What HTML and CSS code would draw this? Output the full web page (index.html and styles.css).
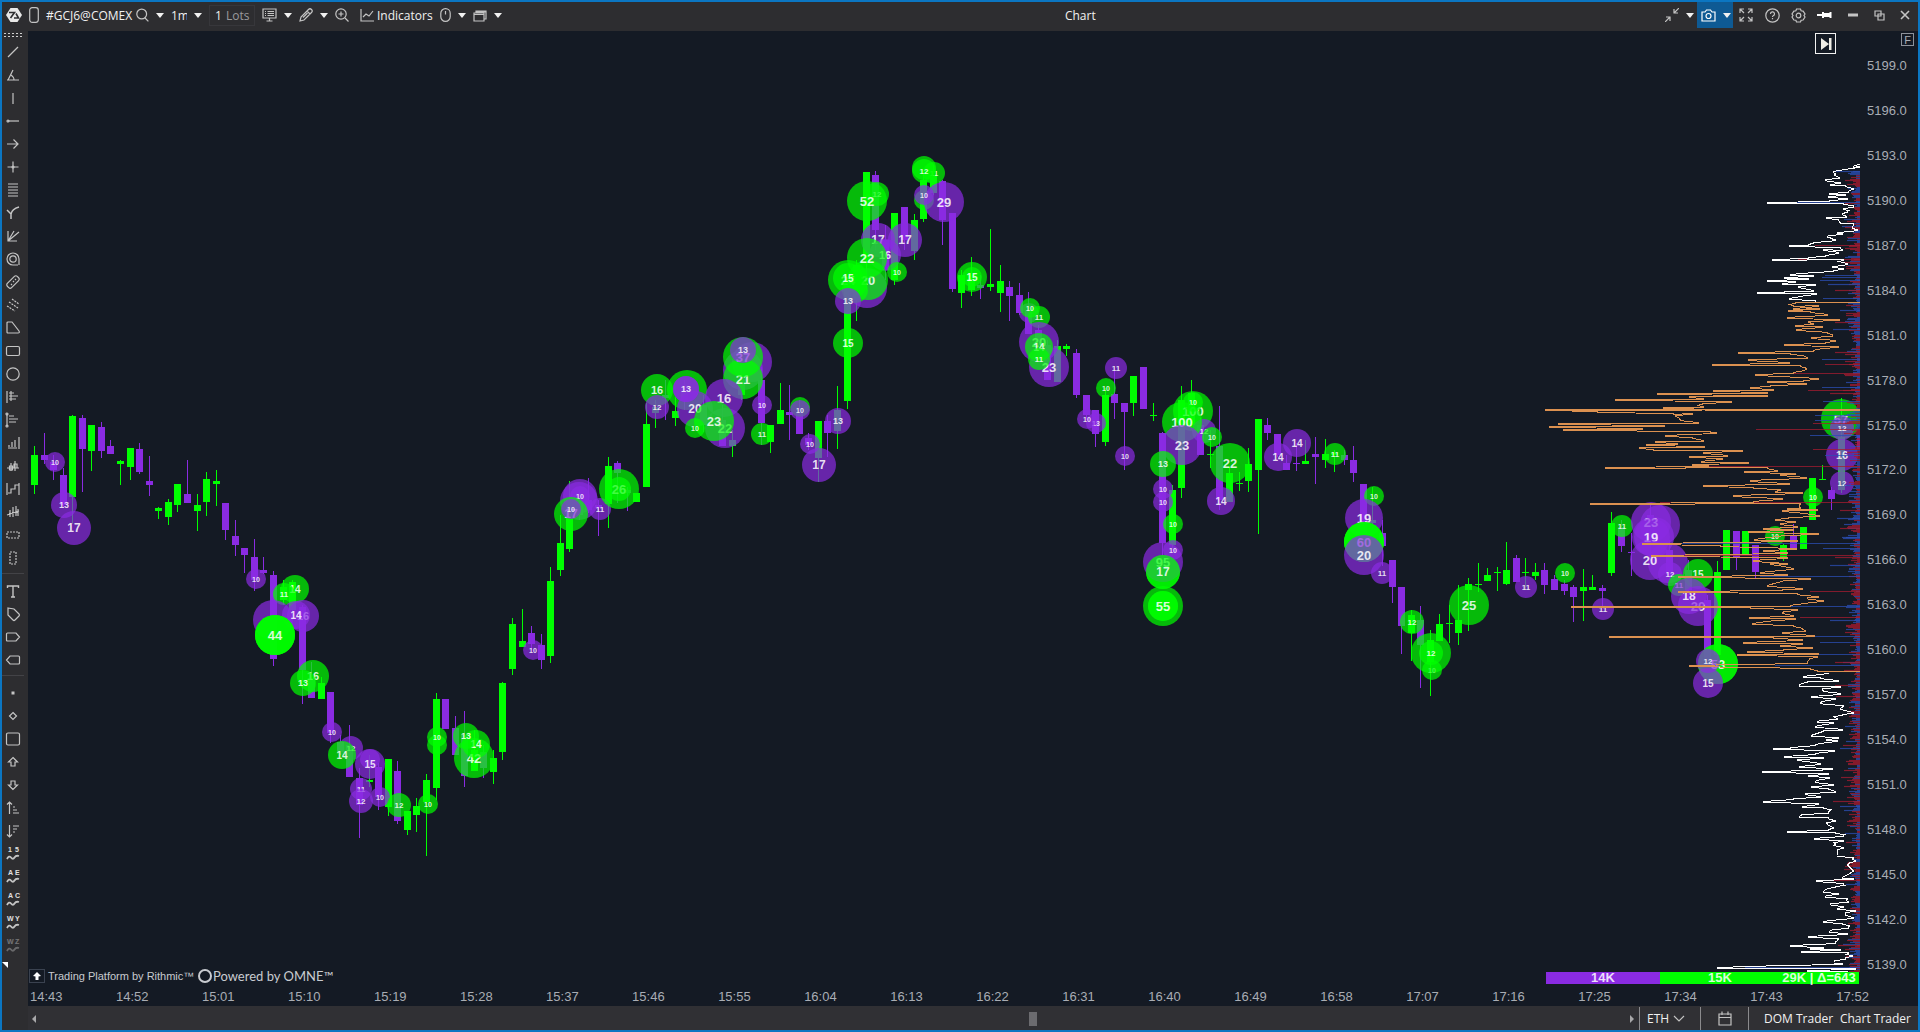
FILE: index.html
```html
<!DOCTYPE html>
<html lang="en">
<head>
  <meta charset="UTF-8" />
  <title>Chart - #GCJ6@COMEX</title>
  <meta name="viewport" content="width=device-width, initial-scale=1.0" />
  <link rel="stylesheet" href="styles.css">
</head>
<body>
  <header class="top-bar">
    <div class="left-bar">
      <button aria-label="Menu"><svg width="16" height="16" viewBox="0 0 16 16"><path d="M4.500 1h7L16 8l-4.500 7h-7L0 8z" fill="#e8e8e8" stroke="none"/><path d="M3 5.500h5.500L4.500 11M8 11h4.500L10 6.500" fill="none" stroke="#2d2d30" stroke-width="1.600"/></svg></button>
      <button aria-label="Link group"><svg width="10" height="16" viewBox="0 0 10 16"><rect x=".7" y=".7" width="8.6" height="14.6" rx="2.5"/></svg></button>
      <span class="symbol">#GCJ6@COMEX</span>
      <button aria-label="Search symbol"><svg width="13" height="14" viewBox="0 0 13 14"><circle cx="5.7" cy="6" r="4.9"/><path d="M9 10l3.4 3.4"/></svg></button>
      <button aria-label="Symbol list" class="caret"></button>
      <select aria-label="Time frame" class="frame"><option>1m</option></select>
      <button aria-label="Time frame list" class="caret"></button>
      <label class="lots"><input type="text" value="1" />Lots</label>
      <button aria-label="Display"><svg width="15" height="14" viewBox="0 0 15 14"><path d="M1 1h13v9H1zM7.500 10v3M4.500 13h6M3 3.500h1M5.500 3.500H12M3 5.500h1M5.500 5.500H12M3 7.500h1M5.500 7.500H12"/></svg></button>
      <button aria-label="Display list" class="caret"></button>
      <button aria-label="Draw"><svg width="14" height="14" viewBox="0 0 14 14"><path d="M1 13l1-4 7.500-7.500a2 2 0 0 1 3 3L5 12zM8 3l3 3M4 9.500l4.500-4.500"/></svg></button>
      <button aria-label="Draw list" class="caret"></button>
      <button aria-label="Zoom in"><svg width="14" height="14" viewBox="0 0 14 14"><circle cx="6" cy="6" r="5.200"/><path d="M10 10l3.500 3.500M6 3.500v5M3.500 6h5"/></svg></button>
      <button class="indicators"><svg width="14" height="13" viewBox="0 0 14 13"><path d="M1 0v12h13M3 8l3-3 3 2 4-5"/></svg>Indicators</button>
      <button aria-label="Mouse"><svg width="11" height="14" viewBox="0 0 11 14"><rect x=".8" y=".7" width="9.400" height="12.600" rx="4.600"/><path d="M5.500 3v3.500"/></svg></button>
      <button aria-label="Mouse list" class="caret"></button>
      <button aria-label="Templates"><svg width="14" height="13" viewBox="0 0 14 13"><path d="M1 4h10v8H1zM1 5.500h10M3 4V2h10v8h-2M3 3h10" /></svg></button>
      <button aria-label="Template list" class="caret"></button>
    </div>
    <div class="title">Chart</div>
    <div class="right-bar">
      <button aria-label="Shrink"><svg width="14" height="14" viewBox="0 0 14 14"><path d="M14 0L9 5M9 1v4h4M0 14l5-5M1 9h4v4"/></svg></button>
      <button aria-label="Shrink options" class="caret"></button>
      <div class="shot">
        <button aria-label="Screenshot"><svg width="15" height="13" viewBox="0 0 15 13"><path d="M1 3h3l1.500-2h4L11 3h3v9H1z"/><circle cx="7.500" cy="7" r="2.500"/></svg></button>
        <button aria-label="Screenshot options" class="caret"></button>
      </div>
      <button class="win" aria-label="Full screen"><svg width="14" height="14" viewBox="0 0 14 14"><path d="M1 5V1h4M1 1l4 4M9 1h4v4M13 1L9 5M1 9v4h4M1 13l4-4M13 9v4H9M13 13L9 9"/></svg></button>
      <button class="win" aria-label="Help"><svg width="15" height="15" viewBox="0 0 15 15"><circle cx="7.500" cy="7.500" r="6.700"/><path d="M5.500 6a2 2 0 1 1 2.700 1.800q-.7.300-.7 1.200M7.500 10v1.200"/></svg></button>
      <button class="win" aria-label="Settings"><svg width="15" height="15" viewBox="0 0 15 15"><path d="M5.500 1h4l.6 1.800 2 .3L14 6l-1 1.500L14 9l-1.900 3-2 .2L9.500 14h-4l-.6-1.800-2-.2L1 9l1-1.500L1 6l1.900-2.900 2-.3z"/><circle cx="7.500" cy="7.500" r="2.300"/></svg></button>
      <button class="win" aria-label="Pin"><svg width="15" height="8" viewBox="0 0 15 8"><path d="M0 4h6M6 1v6M6 3h6v2H6zM13.500 1v6" stroke="#fff" stroke-width="2"/></svg></button>
      <button class="win minimize" aria-label="Minimize"><svg width="10" height="4" viewBox="0 0 10 4"><path d="M0 2h10" stroke-width="3"/></svg></button>
      <button class="win" aria-label="Restore"><svg width="11" height="11" viewBox="0 0 11 11"><path d="M1 1h6v5H1zM4 4h6v6H4z"/></svg></button>
      <button class="win" aria-label="Close"><svg width="10" height="10" viewBox="0 0 10 10"><path d="M1 1l8 8M9 1L1 9" stroke-width="1.600"/></svg></button>
    </div>
  </header>

  <div class="workspace">
    <nav class="tools" id="tools" aria-label="Drawing tools"></nav>

    <main class="main">
      <div class="chart-area">
        <div class="plot">
          <svg class="chart" id="chart" viewBox="28 31 1832 954" preserveAspectRatio="xMaxYMin meet" role="img" aria-label="Price chart"></svg>
          <button class="last-bar" aria-label="Go to last bar"><svg width="12" height="12" viewBox="0 0 12 12"><path d="M1 0v12l8-6zM9 0h2.500v12H9z" fill="#f0eee6" stroke="none"/></svg></button>
          <div class="credits">
            <span class="badge"><svg width="10" height="8" viewBox="0 0 10 8"><path d="M5 0l4 4-2.500.5V8h-3V4.500L1 4z" fill="#fff" stroke="none"/></svg></span>
            <span class="rithmic">Trading Platform by Rithmic™</span>
            <span class="ring"></span>
            <span class="omne">Powered by OMNE™</span>
          </div>
        </div>
        <div class="price-axis" id="prices"><button class="fixed-scale">F</button></div>
        <div class="time-axis" id="times"></div>
      </div>

      <footer class="status">
        <div class="scroller">
          <i class="arrow-left"></i>
          <i class="thumb"></i>
          <i class="arrow-right"></i>
        </div>
        <label class="session">
          <select aria-label="Session"><option>ETH</option></select>
          <svg width="12" height="7" viewBox="0 0 12 7"><path d="M1 1l5 5 5-5"/></svg>
        </label>
        <button class="calendar" aria-label="Calendar"><svg width="14" height="15" viewBox="0 0 14 15"><path d="M1 3h12v11H1zM1 6.500h12M4 .5V4M10 .5V4"/></svg></button>
        <div class="traders">
          <button>DOM Trader</button>
          <button>Chart Trader</button>
        </div>
      </footer>
    </main>
  </div>

  <script src="chart.js"></script>
</body>
</html>
```

FILE: styles.css
```css
* {
  margin: 0;
  padding: 0;
  box-sizing: border-box;
}

body {
  height: 100vh;
  display: flex;
  flex-direction: column;
  overflow: hidden;
  border: 2px solid #0b76c2;
  background: #2d2d30;
  color: #f1f1f1;
  font-family: "Open Sans", "Noto Sans", sans-serif;
  font-size: 12px;
}

button, select, input {
  border: none;
  background: none;
  color: inherit;
  font: inherit;
  appearance: none;
  outline: none;
}

button {
  display: flex;
  align-items: center;
  justify-content: center;
  cursor: pointer;
}

svg {
  display: block;
  fill: none;
  stroke: #c4c4c4;
  stroke-width: 1.2;
}

/* top bar */
.top-bar {
  display: flex;
  flex: 0 0 29px;
  align-items: stretch;
  padding-bottom: 3px;
}

.left-bar, .right-bar {
  display: flex;
  align-items: center;
}

.left-bar {
  gap: 7px;
  padding-left: 4px;
}

.symbol {
  width: 83px;
  white-space: nowrap;
}

.caret::before {
  content: "";
  border: 4px solid transparent;
  border-top: 5px solid #f1f1f1;
  border-bottom: 0;
}

.frame {
  width: 16px;
}

.lots {
  display: flex;
  align-items: center;
  width: 46px;
  height: 21px;
  padding-left: 5px;
  border: 1px solid #37373b;
  color: #9a9a9d;
}

.lots input {
  width: 11px;
  color: #f1f1f1;
}

.indicators {
  gap: 3px;
  margin-left: 4px;
}

.title {
  flex: 1;
  align-self: center;
  padding-right: 6px;
  text-align: center;
}

.right-bar {
  gap: 7px;
}

.shot {
  display: flex;
  align-self: stretch;
  gap: 7px;
  width: 36px;
  margin-left: -4px;
  margin-right: -7px;
  padding-left: 4px;
  background: #0e5a94;
}

.shot svg {
  stroke: #fff;
}

.win {
  width: 26px;
  height: 26px;
  margin-right: -7px;
}

.win:last-child {
  margin-right: 0;
}

.minimize {
  margin-left: 3px;
}

/* drawing tools */
.workspace {
  display: flex;
  flex: 1;
  min-height: 0;
}

.tools {
  position: relative;
  flex: 0 0 26px;
  padding-right: 4px;
}

.tools .grip {
  height: 9px;
  margin: 0 1px;
  background: radial-gradient(#d0d0d0 1px, transparent 1px) 0 1px / 4px 3px;
  background-clip: content-box;
  padding: 2px 0;
}

.tools button {
  width: 22px;
  height: 23px;
}

.tools hr {
  border: none;
  border-top: 1px solid #434347;
  margin: 4px 0 5px;
}

.tools .off {
  opacity: 0.4;
}

.tools svg text {
  fill: #e0e0e0;
  stroke: none;
  font: bold 7px "Liberation Sans", sans-serif;
}

.tools::after {
  content: "";
  position: absolute;
  left: 0;
  bottom: 62px;
  border-top: 6px solid #fff;
  border-left: 6px solid transparent;
}

/* chart */
.main {
  display: flex;
  flex: 1;
  flex-direction: column;
  min-width: 0;
}

.chart-area {
  display: grid;
  flex: 1;
  grid-template-columns: 1fr 58px;
  grid-template-rows: 1fr 21px;
  min-height: 0;
  background: #141a24;
  color: #a9adb4;
  font: 13px/18px "Liberation Sans", Arial, sans-serif;
}

.plot {
  position: relative;
  min-width: 0;
  min-height: 0;
}

.chart {
  position: absolute;
  width: 100%;
  height: 100%;
}

.chart text {
  font: bold 13px "Liberation Sans", Arial, sans-serif;
  text-anchor: middle;
  stroke: none;
  fill: #fff;
  fill-opacity: 0.85;
}

.up {
  fill: #00ff00;
  stroke: none;
}

.down {
  fill: #8a2be2;
  stroke: none;
}

circle.up, circle.down {
  fill-opacity: 0.7;
}

.outer, .value {
  stroke-width: 1;
  shape-rendering: crispEdges;
}

.outer {
  stroke: #fff;
}

.value {
  stroke: #dc9150;
}

.buy {
  stroke: #2b4fb4;
  stroke-opacity: 0.75;
}

.sell {
  stroke: #a51c30;
  stroke-opacity: 0.75;
}

.last-bar {
  position: absolute;
  top: 2px;
  right: 24px;
  width: 21px;
  height: 21px;
  border: 1px solid #f1f1f1;
}

.credits {
  position: absolute;
  left: 1px;
  bottom: 0;
  display: flex;
  align-items: center;
  gap: 3px;
  color: #c8cbd0;
}

.badge {
  padding: 2px;
  border: 1px solid #3a4250;
}

.rithmic {
  width: 147px;
  font-size: 11px;
  white-space: nowrap;
}

.ring {
  width: 14px;
  height: 14px;
  border: 2px solid #c8cbd0;
  border-radius: 50%;
}

.omne {
  margin-left: -2px;
  font-family: Lato, sans-serif;
  font-size: 13px;
}

.price-axis {
  position: relative;
  display: flex;
  flex-direction: column;
  justify-content: space-between;
  padding: 26px 0 11px 7px;
}

.fixed-scale {
  position: absolute;
  top: 2px;
  right: 4px;
  width: 13px;
  height: 13px;
  border: 1px solid #8d929b;
  font-size: 11px;
}

.time-axis {
  display: flex;
  grid-column: 1 / 3;
  justify-content: space-between;
  padding: 3px 49px 0 2px;
}

/* bottom bar */
.status {
  display: flex;
  flex: 0 0 24px;
  padding-top: 1px;
  background: #303034;
}

.scroller {
  display: flex;
  flex: 1;
  align-items: center;
  justify-content: space-between;
  padding: 0 5px 0 4px;
}

.arrow-left, .arrow-right {
  border: 4px solid transparent;
}

.arrow-left {
  border-right-color: #a8a8aa;
  border-left: 0;
}

.arrow-right {
  border-left-color: #a8a8aa;
  border-right: 0;
}

.thumb {
  width: 8px;
  height: 14px;
  margin-left: 400px;
  background: #6b6b6f;
}

.session, .calendar, .traders {
  display: flex;
  align-items: center;
  border-left: 1px solid #8a8a8d;
}

.session {
  width: 61px;
  gap: 4px;
  padding-left: 7px;
}

.session select {
  width: 22px;
}

.calendar {
  width: 48px;
}

.traders {
  justify-content: space-between;
  width: 170px;
  padding: 0 7px 0 15px;
}
```

FILE: chart.js
```js
// candle columns: slot, direction, high, body top, body bottom, low
const candles = [
  [0,1,446,455,485,494],[1,0,433,455,460,464],[2,0,455,462,470,480],[3,0,468,475,505,508],[4,1,415,416,497,524],
  [5,0,415,418,449,492],[6,1,425,425,451,471],[7,0,422,427,451,458],[8,0,440,446,454,454],[9,1,460,461,464,485],
  [10,1,448,448,467,480],[11,0,443,449,472,474],[12,0,456,481,485,496],[13,1,507,508,511,519],[14,1,499,502,517,525],
  [15,1,484,484,505,512],[16,0,460,494,503,503],[17,1,494,505,511,531],[18,1,472,479,502,516],[19,1,470,481,484,506],
  [20,0,503,503,530,540],[21,0,520,536,545,556],[22,0,548,548,555,573],[23,0,539,557,580,591],[24,0,557,570,573,574],
  [25,0,571,575,659,666],[26,1,580,587,600,605],[27,1,580,582,610,616],[28,0,605,607,670,704],[29,0,662,680,698,698],
  [30,1,677,683,699,699],[31,0,692,692,733,743],[32,0,735,742,752,755],[33,0,725,745,777,777],[34,0,768,778,805,838],
  [35,1,755,780,782,787],[36,0,763,767,797,810],[37,1,759,759,807,816],[38,0,761,771,821,824],[39,1,811,811,830,835],
  [40,1,798,806,815,832],[41,1,774,780,802,856],[42,1,693,699,788,800],[43,0,699,699,729,729],[44,0,716,728,755,755],
  [45,0,711,735,776,787],[46,1,730,750,771,771],[47,0,745,752,768,778],[48,1,750,758,772,784],[49,1,682,683,752,760],
  [50,1,618,624,669,675],[51,1,609,641,647,647],[52,0,626,633,644,650],[53,0,634,645,660,669],[54,1,567,581,656,663],
  [55,1,515,543,570,576],[56,1,481,500,549,552],[57,0,490,495,515,520],[58,0,478,500,510,513],[59,0,500,505,508,536],
  [60,1,457,466,504,528],[61,0,461,463,473,503],[62,0,487,490,493,511],[63,1,493,493,502,502],[64,1,403,424,487,487],
  [65,1,400,407,413,428],[66,0,380,395,398,420],[67,1,397,411,418,426],[68,0,380,385,400,410],[70,0,395,405,425,432],
  [72,0,405,420,446,446],[73,1,430,440,446,457],[74,1,365,380,395,400],[76,0,367,380,423,445],[77,1,425,425,442,453],
  [78,1,383,410,424,424],[79,0,385,412,415,440],[80,0,400,413,434,434],[81,0,433,438,445,450],[82,1,421,421,458,482],
  [83,0,415,421,433,457],[84,1,386,410,431,449],[85,1,280,285,401,409],[86,1,260,265,300,321],[87,1,172,172,260,290],
  [88,0,171,175,230,250],[89,0,225,240,270,280],[90,1,213,213,280,285],[91,0,207,207,240,250],[92,1,214,220,251,260],
  [93,1,170,180,219,222],[94,1,165,175,193,195],[95,0,180,181,220,245],[96,0,213,213,289,292],[97,1,270,275,293,308],
  [98,1,257,273,290,296],[99,0,275,285,288,299],[100,1,229,284,287,291],[101,1,265,281,293,312],[102,0,281,287,296,321],
  [103,0,283,295,313,315],[104,0,292,310,334,334],[105,0,325,330,345,350],[106,0,340,345,380,380],[107,1,340,346,382,382],
  [108,1,344,346,349,356],[109,0,349,353,395,398],[110,0,395,395,415,420],[111,0,410,410,434,447],[112,1,388,395,442,446],
  [113,0,370,394,403,419],[114,0,403,403,412,470],[115,1,376,376,403,416],[116,0,367,367,409,409],[117,1,403,415,416,421],
  [118,0,432,433,543,556],[119,1,485,490,545,550],[120,1,386,400,488,498],[121,1,380,393,425,430],[122,0,418,425,455,455],
  [123,1,430,454,455,468],[124,0,406,446,500,510],[125,1,467,473,502,502],[126,1,472,483,484,491],[127,1,448,464,481,492],
  [128,1,419,419,470,534],[129,0,418,425,433,440],[130,0,434,434,455,457],[131,0,455,463,470,470],[132,0,443,463,464,471],
  [133,1,440,461,464,464],[134,0,437,454,457,484],[135,1,439,454,460,468],[136,1,450,453,455,472],[137,0,450,455,460,465],
  [138,0,446,460,473,482],[139,0,484,484,540,545],[140,1,487,520,523,530],[141,0,520,533,546,566],[142,0,560,560,587,603],
  [143,0,587,587,626,654],[144,1,610,615,633,661],[145,0,606,620,645,688],[146,1,630,640,662,696],[147,1,614,624,641,641],
  [148,1,605,623,624,643],[149,1,585,620,633,645],[150,1,578,584,590,631],[151,1,563,584,585,592],[152,1,568,575,581,581],
  [153,1,567,572,573,591],[154,1,542,570,584,585],[155,0,555,558,582,582],[156,1,558,572,573,590],[157,1,563,572,576,580],
  [158,0,563,570,585,594],[159,0,575,579,590,590],[160,0,580,584,591,595],[161,0,585,587,597,622],[162,1,569,587,591,621],
  [163,1,575,587,590,590],[164,0,585,588,591,607],[165,1,512,523,573,576],[166,0,520,527,546,552],[167,0,533,552,553,576],
  [169,0,503,515,545,560],[171,0,540,550,575,580],[173,0,560,570,590,600],[175,0,595,600,660,665],[176,1,561,572,655,660],
  [177,1,530,530,570,570],[178,0,531,531,557,570],[179,1,531,531,555,555],[180,0,545,545,572,578],[183,1,544,545,559,561],
  [184,0,524,535,549,549],[185,1,527,527,549,549],[186,1,478,478,520,520],[187,1,465,479,480,480],[188,0,487,490,499,510],
  [189,1,398,437,490,493],[191,0,430,435,449,452]
];

// big trades: x, y, buy side, size, label (when it differs from size)
const trades = [
  [55,462,0,10],[64,505,0,13],[74,528,0,17],[256,579,0,10],[295,589,1,14],[284,594,1,11],[273,620,0,20,''],
  [303,616,0,16],[296,615,0,14],[275,635,1,20,''],[275,635,1,20,''],[275,635,1,44],[313,676,1,16],[303,683,1,13],
  [332,732,0,10],[351,748,0,12],[342,755,1,14],[370,759,0,10,''],[370,764,0,15],[361,789,0,11],[361,801,0,12],
  [380,797,0,10],[399,805,1,12],[428,804,1,10],[437,745,1,10,''],[437,737,1,10],[474,758,1,42],[476,744,1,14],[466,736,1,13],
  [533,650,0,10],[579,501,0,19,''],[580,496,0,17,''],[580,496,0,10],[600,509,0,11],[571,514,1,17],[571,509,0,10],
  [619,489,1,26],[619,489,1,12,''],[657,390,1,16],[657,407,0,12],[687,390,1,20,''],[695,409,0,18,'20'],[686,389,0,13,''],[686,389,0,13],
  [752,362,0,20,''],[743,370,0,20,''],[743,379,1,21],[743,357,1,37],[743,350,0,13],[724,398,0,19,'16'],[725,428,0,22],
  [714,421,1,23],[695,428,1,10],[762,405,0,10],[762,434,1,11],[800,407,1,10,''],[800,410,0,10],[810,444,0,10],
  [819,465,0,17],[838,421,0,13],[848,343,1,15],
  [877,194,1,12],[867,201,1,52],[905,240,0,17],[878,240,0,17],[885,255,0,16],[867,288,0,20,''],[868,280,1,20],
  [867,258,1,22],[897,272,1,10],[848,280,1,24],[855,290,1,13,''],[848,278,1,15],[848,301,0,13],[934,173,1,11],[924,168,1,12,''],
  [924,171,1,12],[924,200,1,10,''],[944,202,0,29],[924,195,0,10],[972,277,1,10,''],[972,277,1,15],[1029,313,0,10,''],
  [1039,317,1,11],[1030,308,1,10],[1039,342,0,20],[1049,367,0,23],[1039,347,1,14],[1039,359,1,11],[1106,388,1,10],
  [1116,368,0,11],[1096,423,0,10,'13'],[1087,419,0,10],[1125,456,0,10],
  [1193,411,1,100],[1193,402,1,10],[1204,431,0,12],[1212,437,1,10],[1182,422,1,100],[1182,445,0,23],[1163,464,1,13],
  [1163,489,0,10],[1163,502,0,10],[1173,524,1,10],[1163,572,1,17,''],[1163,562,0,95],[1173,550,0,10],[1163,572,1,17],
  [1163,606,1,15,''],[1163,606,1,15,''],[1163,606,1,55],[1230,463,1,22],[1221,501,0,14],[1278,457,0,14],[1297,443,0,14],
  [1335,454,1,11],[1374,496,1,10],[1364,518,0,19],[1364,542,1,20,''],[1364,542,1,20,''],[1364,542,1,60],[1364,555,0,20],
  [1382,573,0,11],[1412,622,1,12],[1432,670,1,10],[1431,653,1,20,''],[1431,653,1,12],[1469,605,1,25],[1565,573,1,10],
  [1526,587,0,11],[1603,609,0,11],[1622,526,1,11],[1660,525,0,20,''],[1654,537,0,20,''],[1651,522,0,23],[1651,537,0,19],
  [1668,563,0,20,''],[1650,560,0,20],[1670,574,0,12],[1698,574,1,15],[1679,585,1,11],[1698,606,0,20],[1689,596,0,18],
  [1718,664,1,20,''],[1718,664,1,53],[1708,661,0,12],[1708,683,0,15],[1775,536,1,10],[1813,497,1,10],
  [1841,419,1,57],[1842,428,0,12],[1842,455,0,16],[1842,483,0,12]
];

// volume profile: width, y
const above = [
  0,163,7,166,0,166,27,171,25,173,21,177,35,179,20,182,30,184,15,185,7,188,12,191,31,193,15,194,32,196,13,198,31,200,
  93,202,17,203,7,205,17,208,13,211,18,213,14,216,34,217,20,222,7,223,8,227,3,229,23,232,18,233,33,236,30,237,25,239,
  47,242,52,244,71,245,20,247,18,249,37,249,22,252,35,255,52,257,88,259,17,259,13,263,28,266,17,268,27,270,70,274,
  47,275,76,277,52,278,93,280,65,281,78,283,45,284,62,286,47,290,103,292,44,293,71,298,45,300
];
const value = [
  0,301,65,302,67,305,42,305,67,308,41,308,72,310,50,311,33,314,73,317,21,319,52,321,47,323,65,325,38,326,64,329,
  33,332,28,335,49,337,25,340,35,342,76,344,22,346,47,350,122,352,70,353,53,357,112,359,71,362,148,364,60,365,54,368,
  67,372,105,374,42,378,57,380,93,381,54,383,90,385,110,387,87,389,147,390,93,392,203,393,93,395,171,396,157,398,
  245,399,129,401,158,403,157,406,197,407,167,408,315,409,0,409,315,409,263,411,187,413,168,413,185,415,180,419,
  162,422,302,423,196,425,311,426,218,428,297,429,150,431,144,432,195,435,168,437,157,440,205,441,183,443,214,444,
  156,446,221,447,207,449,118,450,157,452,133,455,171,456,138,458,159,461,112,462,168,464,152,465,255,467,93,467,
  83,470,116,471,65,473,80,474,54,477,110,480,71,483,157,485,107,487,80,489,85,491,58,492,127,495,78,498,107,501,
  270,503,60,503,60,507,73,508,43,509,78,510,41,515,72,517,85,519,65,521,80,523,63,526,97,528,67,529,112,531,42,533,
  106,539,63,540,218,543,140,545,64,548,97,550,73,552,209,555,73,557,107,560,73,563,90,563,67,568,100,572,73,574,
  182,576,50,578,93,585,58,588,78,589,182,591,63,593,42,596,53,597,37,600,70,605,289,606,110,607,63,609,78,612,
  67,615,111,617,65,618,108,623,67,625,55,630,78,632,46,635,251,636,87,637,58,639,117,642,58,643,80,645,48,647,
  77,649,113,651,42,653,123,654,43,656,53,662,171,665,50,668,43,670,0,671
];
const below = [
  32,672,57,676,40,677,22,680,53,681,61,685,20,686,38,688,37,690,20,693,49,696,25,698,40,702,17,705,20,708,7,712,
  18,714,23,718,43,721,27,722,45,726,18,729,37,730,49,735,22,737,34,739,23,740,45,744,70,747,87,748,26,750,45,753,
  76,756,37,757,63,759,40,763,61,766,28,768,38,769,98,771,32,773,52,775,31,777,45,781,27,784,49,786,25,791,55,793,
  40,796,67,798,97,801,42,803,58,806,37,807,32,812,59,814,61,816,32,817,25,820,33,823,27,827,32,829,73,831,25,832,
  17,835,46,838,17,840,25,843,17,847,23,855,7,857,5,860,12,863,7,870,18,877,7,878,44,880,17,883,25,886,37,891,
  22,893,35,896,13,898,12,901,30,903,17,906,23,908,5,910,15,913,7,917,37,921,18,923,12,927,31,931,13,933,52,936,
  22,938,25,942,70,945,37,947,50,948,20,949,59,951,12,952,8,955,15,958,26,962,18,963,143,967,5,968,53,970,13,971,123,972
];

// strongest delta rows: y, length, buy side
const deltas = [
  [171,27,1],[202,75,1],[245,45,0],[259,62,0],[275,35,1],[277,38,1],[280,40,1],[284,32,1],[290,25,0],[298,37,1],[310,20,1],
  [322,25,0],[329,27,1],[352,25,0],[359,38,1],[364,35,0],[373,85,0],[387,38,1],[390,52,0],[393,30,0],[401,37,1],[410,105,0],
  [415,45,1],[420,45,1],[423,47,0],[429,104,0],[435,50,1],[449,47,0],[455,35,1],[466,160,0],[502,200,0],[510,20,0],
  [518,23,1],[528,20,0],[537,18,1],[543,200,1],[548,37,1],[555,180,0],[557,25,0],[565,30,1],[576,100,1],[591,50,0],
  [606,110,1],[617,60,0],[620,30,1],[636,90,1],[642,40,1],[654,43,1],[662,25,0],[665,85,1],[685,25,0],[696,24,0],
  [748,20,1],[777,19,0],[801,27,0],[806,20,1],[880,27,0],[945,22,0],[967,115,1]
];

const RIGHT = 1860;
const svg = document.getElementById('chart');
let out = '';

candles.forEach(([i, up, high, top, bottom, low]) => {
  const x = Math.round(34 + i * 9.56);
  const cls = up ? 'up' : 'down';
  out += `<rect class="${cls}" x="${x}" y="${high}" width="1" height="${low - high}"/>`;
  out += `<rect class="${cls}" x="${x - 3}" y="${top}" width="7" height="${bottom - top}"/>`;
});

// later trades lie over the labels of earlier ones
trades.forEach(([x, y, up, size, label]) => {
  const r = Math.min(size, 20);
  const text = label === undefined ? size : label;
  out += `<circle class="${up ? 'up' : 'down'}" cx="${x}" cy="${y}" r="${r}"/>`;
  if (text === '') return;
  const fs = Math.ceil(r * 0.65);
  out += `<text x="${x}" y="${y + Math.round(fs * 0.36)}" style="font-size:${fs}px">${text}</text>`;
});

// small delta rows between the strong ones
let seed = 7;
function rnd() {
  seed = (seed * 16807) % 2147483647;
  return seed / 2147483647;
}
let buy = true;
for (let y = 171; y < 972; y++) {
  if (rnd() > 0.6) buy = !buy;
  const len = 3 + Math.round(rnd() * rnd() * 15);
  out += `<path class="${buy ? 'buy' : 'sell'}" d="M${RIGHT} ${y}.5h-${len}"/>`;
}
deltas.forEach(([y, len, buySide]) => {
  out += `<path class="${buySide ? 'buy' : 'sell'}" d="M${RIGHT} ${y}.5h-${len}"/>`;
});

function profile(data, cls) {
  let pts = '';
  for (let i = 0; i < data.length; i += 2) {
    const x = RIGHT - data[i];
    const y = data[i + 1];
    pts += `${x},${y}.5 ${x},${y + 1}.5 `;
    // wide gaps between two levels get a small step halfway
    if (data[i + 3] - y > 2) {
      const mid = (x + RIGHT - data[i + 2]) / 2 + rnd() * 12 - 6;
      pts += `${Math.min(mid, RIGHT - 3)},${y + 2}.5 `;
    }
  }
  return `<polyline class="${cls}" points="${pts}"/>`;
}
out += profile(above, 'outer') + profile(value, 'value') + profile(below, 'outer');

// volume totals
out += `<rect class="down" x="1546" y="972" width="114" height="12"/>
  <rect class="up" x="1660" y="972" width="199" height="12"/>
  <text x="1603" y="982">14K</text>
  <text x="1720" y="982">15K</text>
  <text x="1819" y="982">29K | Δ=643</text>`;
svg.innerHTML = out;

// axes
const prices = document.getElementById('prices');
for (let p = 5199; p >= 5139; p -= 3) {
  prices.insertAdjacentHTML('beforeend', `<span>${p}.0</span>`);
}
const times = document.getElementById('times');
for (let i = 0; i < 22; i++) {
  const t = 14 * 60 + 43 + i * 9;
  times.insertAdjacentHTML('beforeend', `<span>${Math.floor(t / 60)}:${String(t % 60).padStart(2, '0')}</span>`);
}

// drawing tools, 16x16 icons
const wave = '<path stroke-width="1.8" d="M2 13q2-4 4-1.500t3.500 0T14 10"/>';
const tools = [
  ['Line', '<path d="M3 13L13 3"/>'],
  ['Angle', '<path d="M2 13h12M3 13L8 3M6 8q3 2 3 5"/>'],
  ['Vertical line', '<path d="M8 3v11"/>'],
  ['Ray', '<path d="M3 8h11"/><circle cx="3" cy="8" r="1"/>'],
  ['Arrow', '<path d="M2 8h11M8.500 3.500L13 8l-4.500 4.500"/>'],
  ['Cross', '<path d="M8 2.500v11M2.500 8h11"/><circle cx="8" cy="8" r="1"/>'],
  ['Fibonacci', '<path d="M3 2h10M3 5h10M3 8h10M3 11h10M3 14h10"/>'],
  ['Pitchfork', '<path stroke-width="1.500" d="M2 5l4 4v5M6 9q1-5 8-7"/>'],
  ['Fan', '<path d="M3 3v10h9M3 13L14 4M3 13L9 3"/>'],
  ['Spiral', '<path d="M13 14H8a6 6 0 1 1 6-6v6"/><circle cx="8" cy="8" r="3.200"/>'],
  ['Ruler', '<rect x="5" y="1" width="6" height="14" rx="2" transform="rotate(45 8 8)"/><path d="M6 10l1 1M8 7l1 1M10 5l1 1"/>'],
  ['Channel', '<path stroke-dasharray="2 1" d="M2 9l8 5M4 5l9 6M7 2l7 5"/>'],
  ['Triangle', '<path d="M3 2l4 0 7 9q1 2-1 2H3q-1 0-1-1V3q0-1 1-1z"/>'],
  ['Rectangle', '<rect x="1.500" y="3.500" width="13" height="9" rx="1.500"/>'],
  ['Ellipse', '<circle cx="8" cy="8" r="6.200"/>'],
  ['Left profile', '<path d="M2 2v12M4 4h5M4 7h9M4 10h7M6 2v10"/>'],
  ['Anchored profile', '<path d="M2 2v12M4 4h5M4 7h9M4 10h7"/><circle cx="2" cy="2" r="1"/><circle cx="2" cy="14" r="1"/>'],
  ['Bottom profile', '<path d="M14 2v12M3 13h9M10 5v7M7 7v5M4 10v2"/>'],
  ['Candles', '<path d="M2 10h12M6 5v8M10 3v10M4.500 8h3v4h-3zM9 6h3v4H9z"/>'],
  ['Steps', '<path d="M2 2v12M14 2v12M3 12h3V8h4V4h4"/>'],
  ['Bars', '<path d="M2 11l12-4M5 6v7M8 3v10M11 2v10M13 5v7"/>'],
  ['Horizontal range', '<path stroke-dasharray="2 1" d="M2 5h12v6H2z"/>'],
  ['Vertical range', '<path stroke-dasharray="2 1" d="M5 2h6v12H5z"/>'],
  null,
  ['Text', '<path stroke-width="1.400" d="M2.500 5V3h11v2M8 3v11M6 14h4"/>'],
  ['Tag', '<path d="M3 2l6 1 5 5q1 1 0 2l-4 4q-1 1-2 0L3 9z"/>'],
  ['Right label', '<path d="M2.500 4H11l3.500 4L11 12H2.500q-1 0-1-1V5q0-1 1-1z"/>'],
  ['Left label', '<path d="M13.500 4H5L1.500 8 5 12h8.500q1 0 1-1V5q0-1-1-1z"/>'],
  null,
  ['Dot', '<path stroke-width="3" d="M6.500 8h3"/>'],
  ['Diamond', '<path d="M8 4.500L11.500 8 8 11.500 4.500 8z"/>'],
  ['Square', '<rect x="1.500" y="2" width="13" height="12" rx="1.500"/>'],
  ['Arrow up', '<path d="M8 3.500L12.500 8H10v4H6V8H3.500z"/>'],
  ['Arrow down', '<path d="M8 12.500L3.500 8H6V4h4v4h2.500z"/>'],
  ['Sort up', '<path d="M4.500 14V2M2 4.500L4.500 2 7 4.500M8 7h2M8 10h4M8 13h6"/>'],
  ['Sort down', '<path d="M4.500 2v12M2 11.500L4.500 14 7 11.500M8 3h6M8 6h4M8 9h2"/>'],
  ['Waves 1 5', '<text x="3" y="6">1</text><text x="10" y="6">5</text>' + wave],
  ['Waves A E', '<text x="3" y="6">A</text><text x="10" y="6">E</text>' + wave],
  ['Waves A C', '<text x="3" y="6">A</text><text x="10" y="6">C</text>' + wave],
  ['Waves W Y', '<text x="2" y="6">W</text><text x="10" y="6">Y</text>' + wave],
  ['Waves W Z', '<text x="2" y="6">W</text><text x="10" y="6">Z</text>' + wave, 'off']
];
document.getElementById('tools').innerHTML = '<div class="grip"></div>' + tools.map(t => t
  ? `<button aria-label="${t[0]}" class="${t[2] || ''}"><svg width="16" height="16" viewBox="0 0 16 16">${t[1]}</svg></button>`
  : '<hr>').join('');
```
